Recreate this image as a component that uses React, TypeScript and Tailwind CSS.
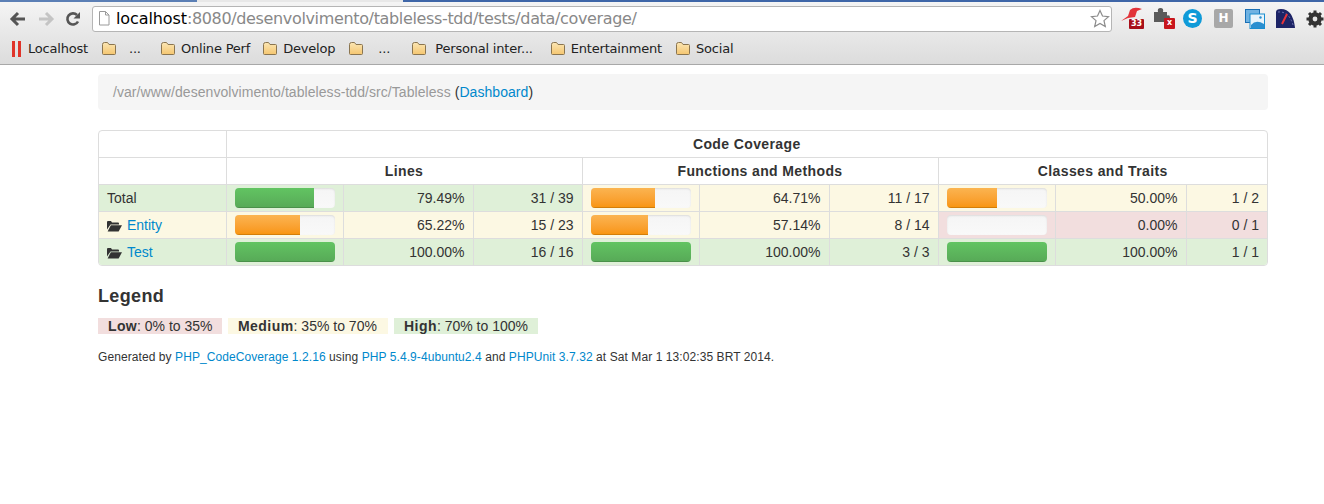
import React from "react"

const uiFont = "font-['DejaVu_Sans',sans-serif]"

function Folder() {
  return (
    <svg width="16" height="15" viewBox="0 0 16 15" className="shrink-0">
      <defs>
        <linearGradient id="fold" x1="0" y1="0" x2="0" y2="1">
          <stop offset="0" stopColor="#fbe6b4" />
          <stop offset="1" stopColor="#f5c670" />
        </linearGradient>
      </defs>
      <path d="M1.5 3.5 Q1.5 1.5 3.5 1.5 H6.5 L8 3.5 H13.5 Q14.5 3.5 14.5 4.5 V12.5 Q14.5 13.5 13.5 13.5 H2.5 Q1.5 13.5 1.5 12.5 Z" fill="url(#fold)" stroke="#8a7550" />
    </svg>
  )
}

function OpenFolderIcon() {
  return (
    <svg width="15" height="12" viewBox="0 0 15 12" className="shrink-0">
      <path d="M0 2 Q0 1 1 1 H4 L5 2.5 H11 Q12 2.5 12 3.5 V4.5 H3.5 L0 9.5 Z" fill="#333" />
      <path d="M3.8 5.3 H15 L11.6 11.5 H0.6 Z" fill="#333" />
    </svg>
  )
}

function Bar({ pct, color }: { pct: number; color: "green" | "orange" | "none" }) {
  return (
    <div className="h-5 w-[100px] rounded-[4px] bg-gradient-to-b from-[#f5f5f5] to-[#f9f9f9] shadow-[inset_0_1px_2px_rgba(0,0,0,0.1)] overflow-hidden">
      {color === "green" && (
        <div className="h-full bg-gradient-to-b from-[#62c462] to-[#57a957] shadow-[inset_0_-1px_0_rgba(0,0,0,0.15)]" style={{ width: `${pct}%` }} />
      )}
      {color === "orange" && (
        <div className="h-full bg-gradient-to-b from-[#fbb450] to-[#f89406] shadow-[inset_0_-1px_0_rgba(0,0,0,0.15)]" style={{ width: `${pct}%` }} />
      )}
    </div>
  )
}

type Group = { pct: number; label: string; count: string; bg: string; bar: "green" | "orange" | "none" }
type Row = { name: string; link: boolean; bg: string; groups: Group[] }

const green = "bg-[#dff0d8]"
const yellow = "bg-[#fcf8e3]"
const red = "bg-[#f2dede]"

const rows: Row[] = [
  {
    name: "Total",
    link: false,
    bg: green,
    groups: [
      { pct: 79.49, label: "79.49%", count: "31 / 39", bg: green, bar: "green" },
      { pct: 64.71, label: "64.71%", count: "11 / 17", bg: yellow, bar: "orange" },
      { pct: 50, label: "50.00%", count: "1 / 2", bg: yellow, bar: "orange" },
    ],
  },
  {
    name: "Entity",
    link: true,
    bg: yellow,
    groups: [
      { pct: 65.22, label: "65.22%", count: "15 / 23", bg: yellow, bar: "orange" },
      { pct: 57.14, label: "57.14%", count: "8 / 14", bg: yellow, bar: "orange" },
      { pct: 0, label: "0.00%", count: "0 / 1", bg: red, bar: "none" },
    ],
  },
  {
    name: "Test",
    link: true,
    bg: green,
    groups: [
      { pct: 100, label: "100.00%", count: "16 / 16", bg: green, bar: "green" },
      { pct: 100, label: "100.00%", count: "3 / 3", bg: green, bar: "green" },
      { pct: 100, label: "100.00%", count: "1 / 1", bg: green, bar: "green" },
    ],
  },
]

const bookmarks = [
  { label: "...", cls: "ml-[12px] w-[31px]" },
  { label: "Online Perf", cls: "ml-[5px] mr-[12px]" },
  { label: "Develop", cls: "ml-[5px] mr-[13px]" },
  { label: "...", cls: "ml-[14px] w-[33px]" },
  { label: "Personal inter...", cls: "ml-[8px] mr-[17px]" },
  { label: "Entertainment", cls: "ml-[5px] mr-[13px]" },
  { label: "Social", cls: "ml-[5px]" },
]

function Toolbar() {
  return (
    <div className={`${uiFont} bg-gradient-to-b from-[#f5f5f5] to-[#dcdcdc] border-b border-[#a8a8a8] h-[65px]`}>
      <div className="flex h-[2px]">
        <div className="w-[197px] bg-[#5b7fb5]" />
        <div className="w-[206px] bg-[#e8e8e8]" />
        <div className="flex-1 bg-[#3f66a8]" />
      </div>
      <div className="flex items-center h-[33px] pl-[9px]">
        <svg width="18" height="16" viewBox="0 0 18 16">
          <path d="M9 2 L3 8 L9 14 M3.5 8 H16" fill="none" stroke="#555" strokeWidth="3" />
        </svg>
        <svg width="18" height="16" viewBox="0 0 18 16" className="ml-[10px]">
          <path d="M9 2 L15 8 L9 14 M14.5 8 H2" fill="none" stroke="#c4c4c4" strokeWidth="3" />
        </svg>
        <svg width="16" height="16" viewBox="0 0 16 16" className="ml-[10px]">
          <path d="M13 10.5 A5.6 5.6 0 1 1 12 4" fill="none" stroke="#555" strokeWidth="2.6" />
          <path d="M15 1 V7.5 H8.5 Z" fill="#555" />
        </svg>
        <div className="ml-[11px] w-[1021px] h-[26px] flex items-center bg-white border border-[#b5b5b5] rounded-[3px] pl-[5px] pr-[1px]">
          <svg width="12" height="15" viewBox="0 0 12 15" className="shrink-0">
            <path d="M1.5 0.5 H7.5 L11 4 V14 H1.5 Z M7.5 0.5 V4 H11" fill="#fff" stroke="#9a9a9a" />
          </svg>
          <span className="ml-[6px] text-[16px] leading-none whitespace-nowrap text-[#888] tracking-[-0.35px]">
            <span className="text-black tracking-[-0.1px]">localhost</span>:8080/desenvolvimento/tableless-tdd/tests/data/coverage/
          </span>
          <svg width="20" height="19" viewBox="0 0 20 19" className="ml-auto shrink-0">
            <path d="M10 1.5 L12.5 7 L18.5 7.6 L14 11.6 L15.3 17.5 L10 14.5 L4.7 17.5 L6 11.6 L1.5 7.6 L7.5 7 Z" fill="#fff" stroke="#8c8c8c" strokeWidth="1.2" />
          </svg>
        </div>
        {/* extension icons */}
        <div className="relative ml-[9px] w-[23px] h-[24px] shrink-0">
          <svg width="22" height="15" viewBox="0 0 22 15">
            <path d="M0 14 L7 9 L9 3 Q13 -1 21 2 L16 4 L14 10 L7 11 Z" fill="#e2343a" />
          </svg>
          <span className="absolute left-[8px] top-[12px] w-[15px] h-[10px] bg-[#a8101a] rounded-[1px] text-white text-[8px] leading-[10px] font-bold text-center">33</span>
        </div>
        <div className="relative ml-[10px] w-[22px] h-[24px] shrink-0">
          <svg width="16" height="16" viewBox="0 0 16 16">
            <path d="M0 5 H4 Q3 1 6.5 1 Q10 1 9 5 H13 V8.5 Q16 7.5 16 10.5 Q16 13.5 13 12.5 V15 H0 Z" fill="#5a5a5a" />
          </svg>
          <span className="absolute left-[10px] top-[11px] w-[11px] h-[11px] bg-[#c8161d] rounded-[1px] text-white text-[8px] leading-[10px] font-bold text-center">x</span>
        </div>
        <div className="ml-[7px] w-[19px] h-[19px] rounded-full bg-[#0f9ad8] text-white text-[14px] font-bold leading-[19px] text-center shrink-0">S</div>
        <div className="ml-[12px] w-[19px] h-[19px] rounded-[2px] bg-[#a8a8a8] text-white text-[12px] font-bold leading-[19px] text-center shrink-0">H</div>
        <svg width="20" height="20" viewBox="0 0 20 20" className="ml-[12px] shrink-0">
          <rect x="0.5" y="0.5" width="14" height="13" fill="#6fb2e2" stroke="#1a6fb5" />
          <rect x="5" y="5" width="14.5" height="14.5" fill="#e8f4fb" stroke="#1a8ed0" />
          <path d="M6 16 Q11 10 19 15 V19 H6 Z" fill="#2a8fd0" />
          <circle cx="15.5" cy="8.5" r="1.2" fill="#2a8fd0" />
        </svg>
        <svg width="19" height="19" viewBox="0 0 19 19" className="ml-[11px] shrink-0">
          <path d="M0 19 V3 Q0 0 5 0 Q17 0 19 19 Z" fill="#1d2466" />
          <path d="M2 3 Q13 2 17 16" fill="none" stroke="#6d74b0" strokeWidth="1" strokeDasharray="2 2" />
          <path d="M6 15 L11 5" stroke="#e8343a" strokeWidth="2" />
        </svg>
        <svg width="18" height="18" viewBox="0 0 18 18" className="ml-[11px] shrink-0">
          <circle cx="9" cy="9" r="5" fill="none" stroke="#333" strokeWidth="3.4" />
          <path d="M9 0.5 V17.5 M0.5 9 H17.5 M3 3 L15 15 M15 3 L3 15" stroke="#333" strokeWidth="3" />
          <circle cx="9" cy="9" r="2.4" fill="#e6e6e6" />
        </svg>
      </div>
      <div className="flex items-center h-[27px] pl-[12px] text-[13px] tracking-[-0.2px] text-[#222] whitespace-nowrap">
        <div className="flex gap-[3px] shrink-0">
          <div className="w-[3px] h-[16px] bg-[#e0342a]" />
          <div className="w-[3px] h-[16px] bg-[#e0342a]" />
        </div>
        <span className="ml-[7px] mr-[13px]">Localhost</span>
        {bookmarks.map((b, i) => (
          <React.Fragment key={i}>
            <Folder />
            <span className={b.cls}>{b.label}</span>
          </React.Fragment>
        ))}
      </div>
    </div>
  )
}

function CoverageTable() {
  const cell = "border-l border-t border-[#dddddd] px-2 h-[27px]"
  return (
    <div className="mt-5 border border-[#dddddd] rounded-[4px] overflow-hidden">
      <table className="w-full table-fixed border-collapse text-[14px] text-[#333]">
        <colgroup>
          <col className="w-[127px]" />
          <col className="w-[117px]" />
          <col className="w-[130px]" />
          <col className="w-[109px]" />
          <col className="w-[117px]" />
          <col className="w-[130px]" />
          <col className="w-[109px]" />
          <col className="w-[117px]" />
          <col className="w-[131px]" />
          <col />
        </colgroup>
        <thead>
          <tr>
            <th className="h-[26px]" />
            <th colSpan={9} className="border-l border-[#dddddd] font-bold text-center tracking-[0.38px] pt-[2px]">Code Coverage</th>
          </tr>
          <tr>
            <th className="border-t border-[#dddddd] h-[27px]" />
            <th colSpan={3} className={`${cell} font-bold text-center tracking-[0.38px] pt-[2px]`}>Lines</th>
            <th colSpan={3} className={`${cell} font-bold text-center tracking-[0.38px] pt-[2px]`}>Functions and Methods</th>
            <th colSpan={3} className={`${cell} font-bold text-center tracking-[0.38px] pt-[2px]`}>Classes and Traits</th>
          </tr>
        </thead>
        <tbody>
          {rows.map((r) => (
            <tr key={r.name}>
              <td className={`border-t border-[#dddddd] h-[27px] pl-2 pt-[2px] ${r.bg}`}>
                {r.link ? (
                  <span className="flex items-center gap-[5px]">
                    <OpenFolderIcon />
                    <a className="text-[#0088cc]">{r.name}</a>
                  </span>
                ) : (
                  r.name
                )}
              </td>
              {r.groups.map((g, i) => (
                <React.Fragment key={i}>
                  <td className={`${cell} ${g.bg}`}>
                    <Bar pct={g.pct} color={g.bar} />
                  </td>
                  <td className={`${cell} ${g.bg} text-right pt-[2px]`}>{g.label}</td>
                  <td className={`${cell} ${g.bg} text-right pt-[2px]`}>{g.count}</td>
                </React.Fragment>
              ))}
            </tr>
          ))}
        </tbody>
      </table>
    </div>
  )
}

export default function App() {
  return (
    <div className="w-[1324px] h-[504px] overflow-hidden bg-white font-['Liberation_Sans',sans-serif]">
      <Toolbar />
      <div className="w-[1170px] ml-[98px]">
        <div className="mt-[9px] h-[36px] flex items-center bg-[#f5f5f5] rounded-[4px] px-[15px] text-[14px] text-[#999] tracking-[0.06px]">
          <span className="whitespace-pre">/var/www/desenvolvimento/tableless-tdd/src/Tableless <span className="text-[#333]">(</span><a className="text-[#0088cc]">Dashboard</a><span className="text-[#333]">)</span></span>
        </div>
        <CoverageTable />
        <h4 className="mt-[20px] text-[18px] leading-[20px] font-bold tracking-[0.35px] text-[#333]">Legend</h4>
        <div className="mt-[12px] flex gap-[6px] text-[14px] leading-[16px] text-[#333]">
          <span className="bg-[#f2dede] pl-[10px] w-[124px] h-4"><strong className="tracking-[0.35px]">Low</strong>: 0% to 35%</span>
          <span className="bg-[#fcf8e3] pl-[10px] w-[160px] h-4"><strong className="tracking-[0.45px]">Medium</strong>: 35% to 70%</span>
          <span className="bg-[#dff0d8] pl-[10px] w-[144px] h-4"><strong className="tracking-[0.45px]">High</strong>: 70% to 100%</span>
        </div>
        <p className="mt-[15px] text-[12px] leading-[16px] tracking-[0.08px] text-[#333]">
          Generated by <a className="text-[#0088cc]">PHP_CodeCoverage 1.2.16</a> using <a className="text-[#0088cc]">PHP 5.4.9-4ubuntu2.4</a> and <a className="text-[#0088cc]">PHPUnit 3.7.32</a> at Sat Mar 1 13:02:35 BRT 2014.
        </p>
      </div>
    </div>
  )
}
